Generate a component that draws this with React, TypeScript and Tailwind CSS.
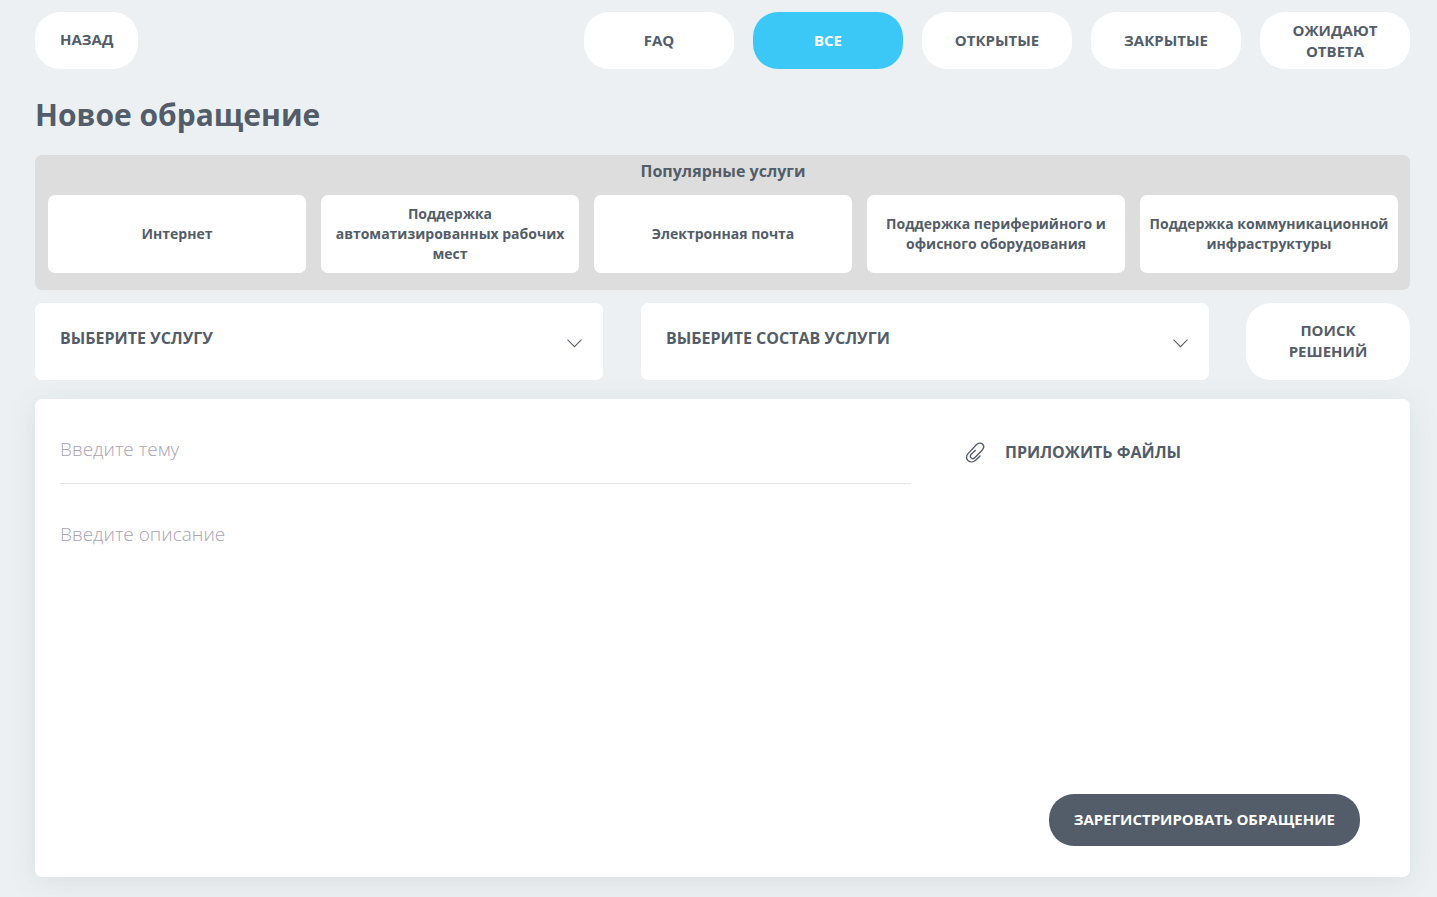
import React, { useState } from 'react';

interface FilterItem {
  id: string;
  label: string;
}

const filters: FilterItem[] = [
  { id: 'faq', label: 'FAQ' },
  { id: 'all', label: 'ВСЕ' },
  { id: 'open', label: 'ОТКРЫТЫЕ' },
  { id: 'closed', label: 'ЗАКРЫТЫЕ' },
  { id: 'waiting', label: 'ОЖИДАЮТ ОТВЕТА' },
];

const popularServices: string[] = [
  'Интернет',
  'Поддержка автоматизированных рабочих мест',
  'Электронная почта',
  'Поддержка периферийного и офисного оборудования',
  'Поддержка коммуникационной инфраструктуры',
];

interface ServiceSelectProps {
  id: string;
  placeholder: string;
  options: string[];
  value: string;
  onChange: (value: string) => void;
}

function ServiceSelect({ id, placeholder, options, value, onChange }: ServiceSelectProps) {
  return (
    <div className="relative flex-1">
      <select
        id={id}
        aria-label={placeholder}
        value={value}
        onChange={(e) => onChange(e.target.value)}
        className="block h-[77px] w-full appearance-none rounded-[7px] bg-white pr-14 pb-2 pl-[25px] text-base font-bold text-[#535d69] outline-none"
      >
        <option value="">{placeholder}</option>
        {options.map((option) => (
          <option key={option} value={option}>{option}</option>
        ))}
      </select>
      <svg
        className="pointer-events-none absolute top-9 right-[21px]"
        width="15"
        height="9"
        viewBox="0 0 15 9"
        fill="none"
        stroke="#535d69"
        strokeWidth="1.1"
      >
        <path d="M0.5 0.7 7.5 7.7 14.5 0.7" />
      </svg>
    </div>
  );
}

function ClipIcon() {
  return (
    <svg
      width="20"
      height="22"
      viewBox="0 0 20 22"
      fill="none"
      stroke="#535d69"
      strokeWidth="1.4"
      strokeLinecap="round"
      strokeLinejoin="round"
    >
      <path d="M15 14.9 10.6 19.2C8.2 21.4 5 21.4 3 19.5 1.1 17.5 1.2 14.7 3.1 12.6L11.6 3.6C13.4 1.8 16 1.7 17.5 3.1 19 4.7 18.9 7.1 17.3 8.9L9.7 16.7C8.6 17.8 7 17.8 6 16.8 5 15.8 5.1 14.4 6.2 13.3L10.2 9.4" />
    </svg>
  );
}

export default function App() {
  const [activeFilter, setActiveFilter] = useState('all');
  const [service, setService] = useState('');
  const [serviceItem, setServiceItem] = useState('');

  return (
    <div className="min-h-screen bg-[#ecf0f3] pt-3 pr-[27px] pb-5 pl-[35px] font-['Open_Sans',sans-serif] text-[#535d69]">
      {/* Top navigation */}
      <header className="flex items-start justify-between">
        <button type="button" className="h-[57px] rounded-[25px] bg-white px-[25px] pb-0.5 text-[15px] font-bold">
          НАЗАД
        </button>
        <nav className="flex gap-[19px]">
          {filters.map((filter) => (
            <button
              key={filter.id}
              type="button"
              onClick={() => setActiveFilter(filter.id)}
              className={`h-[57px] w-[150px] rounded-[25px] px-6 text-[15px] leading-[21px] font-bold ${
                activeFilter === filter.id ? 'bg-[#3cc8f6] text-white' : 'bg-white'
              }`}
            >
              {filter.label}
            </button>
          ))}
        </nav>
      </header>

      <h1 className="mt-6 mb-[18px] text-3xl leading-[44px] font-bold">Новое обращение</h1>

      {/* Popular services */}
      <section className="rounded-[7px] bg-[#ddd] pt-1 pr-3 pb-[17px] pl-[13px]">
        <h2 className="mb-3 text-center text-base font-bold">Популярные услуги</h2>
        <div className="grid grid-cols-5 gap-[15px]">
          {popularServices.map((name) => (
            <button
              key={name}
              type="button"
              onClick={() => setService(name)}
              className="h-[78px] rounded-[7px] bg-white px-2 text-sm leading-5 font-bold"
            >
              {name}
            </button>
          ))}
        </div>
      </section>

      {/* Service pickers */}
      <div className="mt-[13px] flex">
        <div className="flex flex-1 gap-[38px]">
          <ServiceSelect
            id="service"
            placeholder="ВЫБЕРИТЕ УСЛУГУ"
            options={popularServices}
            value={service}
            onChange={setService}
          />
          <ServiceSelect
            id="service-item"
            placeholder="ВЫБЕРИТЕ СОСТАВ УСЛУГИ"
            options={[]}
            value={serviceItem}
            onChange={setServiceItem}
          />
        </div>
        <button type="button" className="ml-[37px] h-[77px] w-[164px] rounded-[25px] bg-white px-8 pb-0.5 text-[15px] leading-[21px] font-bold">
          ПОИСК РЕШЕНИЙ
        </button>
      </div>

      {/* Request form */}
      <form
        onSubmit={(e) => e.preventDefault()}
        className="mt-[19px] flex min-h-[478px] rounded-[7px] bg-white pt-4 pr-[50px] pb-[31px] pl-[25px] shadow-[0_5px_30px_rgba(70,90,90,0.1)]"
      >
        <div className="flex flex-[851] flex-col">
          <input
            type="text"
            aria-label="Введите тему"
            placeholder="Введите тему"
            className="h-[69px] w-full border-b border-[#e6e6e6] text-[19px] font-light outline-none placeholder:text-[#a9a3b5]"
          />
          <textarea
            aria-label="Введите описание"
            placeholder="Введите описание"
            className="mt-9 w-full flex-1 resize-none text-[19px] font-light outline-none placeholder:text-[#a9a3b5]"
          />
        </div>
        <div className="ml-[54px] flex flex-[395] flex-col justify-between">
          <label htmlFor="files" className="mt-[25px] flex cursor-pointer items-center gap-5 text-base font-bold">
            <ClipIcon />
            ПРИЛОЖИТЬ ФАЙЛЫ
            <input id="files" type="file" multiple className="sr-only" />
          </label>
          <button type="submit" className="h-[52px] self-end rounded-[25px] bg-[#535d69] px-[25px] pb-0.5 text-[15px] font-bold text-white">
            ЗАРЕГИСТРИРОВАТЬ ОБРАЩЕНИЕ
          </button>
        </div>
      </form>
    </div>
  );
}
